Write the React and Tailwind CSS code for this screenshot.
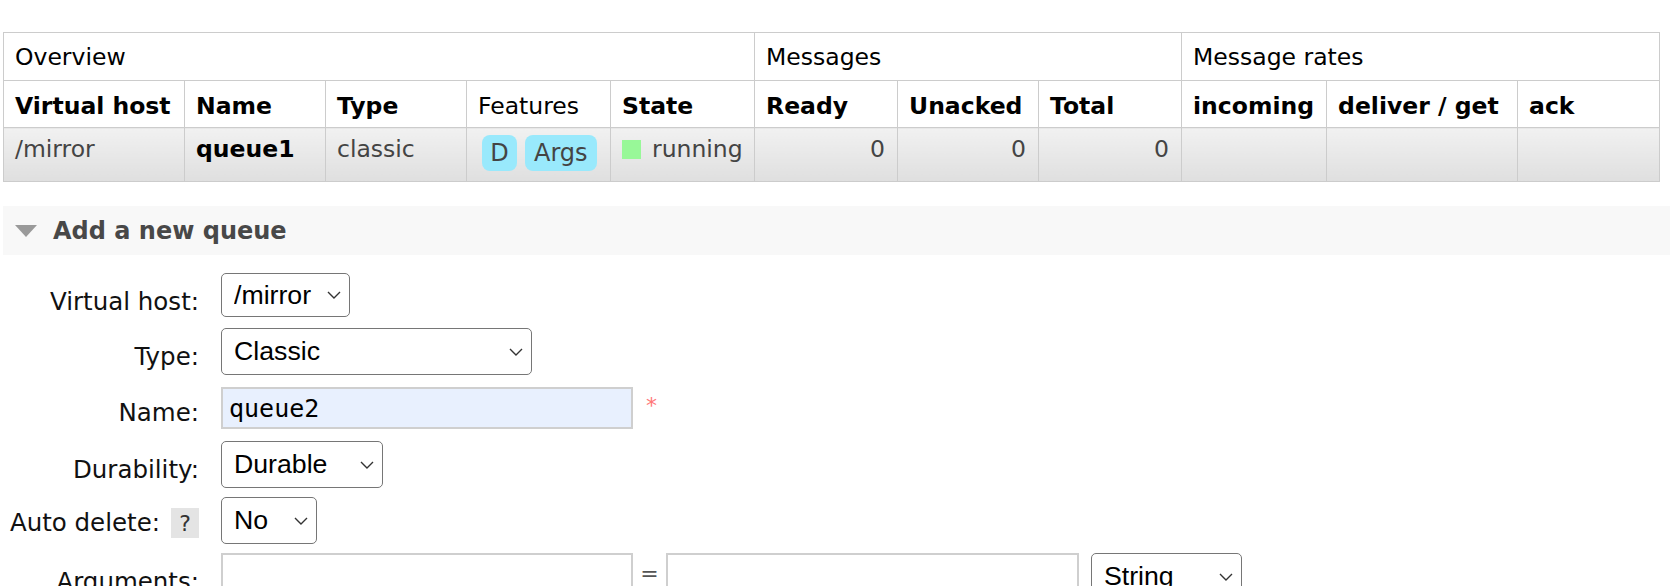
const Chevron = () => (
  <svg
    className="pointer-events-none absolute right-[9px] top-1/2 -translate-y-1/2"
    width="14"
    height="8"
    viewBox="0 0 14 8"
    fill="none"
  >
    <path d="M1 1l6 6 6-6" stroke="#333" strokeWidth="1.4" />
  </svg>
);

const Select = ({ className, options }) => (
  <div className={`relative ${className}`}>
    <select
      defaultValue={options[0]}
      className="w-full h-full appearance-none rounded-[5px] border border-[#767676] bg-white pl-[12px] pr-[30px] font-['Liberation_Sans',Arial,sans-serif] text-[26.7px] text-black outline-none"
    >
      {options.map((o) => (
        <option key={o}>{o}</option>
      ))}
    </select>
    <Chevron />
  </div>
);

const Row = ({ label, help, offset, className, children }) => (
  <div className={`flex items-center ${className}`}>
    <div className={`w-[199px] shrink-0 flex items-center justify-end text-[24.5px] text-[#111] ${offset}`}>
      <span>{label}</span>
      {help && (
        <span className="ml-[11px] w-[28px] h-[30px] flex items-center justify-center bg-[#e4e4e4] text-[22px] text-[#333]">
          ?
        </span>
      )}
    </div>
    <div className="ml-[22px] flex items-center">{children}</div>
  </div>
);

const th = 'border border-[#ccc] px-[11px] text-left align-middle';
const td =
  'border border-[#ccc] px-[11px] pt-[8px] align-top bg-gradient-to-b from-[#f1f1f1] to-[#dfdfdf] text-[#444] leading-[27px]';

export default function App() {
  return (
    <div className="min-h-[586px] bg-white pl-[3px] pt-[32px] font-['DejaVu_Sans',Verdana,sans-serif] text-black">
      <table className="table-fixed border-collapse w-[1657px] text-[23.5px]">
        <colgroup>
          <col className="w-[181px]" />
          <col className="w-[141px]" />
          <col className="w-[141px]" />
          <col className="w-[144px]" />
          <col className="w-[144px]" />
          <col className="w-[143px]" />
          <col className="w-[141px]" />
          <col className="w-[143px]" />
          <col className="w-[145px]" />
          <col className="w-[191px]" />
          <col className="w-[142px]" />
        </colgroup>
        <thead>
          <tr className="h-[48px]">
            <th colSpan={5} className={`${th} font-normal pt-[2px]`}>Overview</th>
            <th colSpan={3} className={`${th} font-normal pt-[2px]`}>Messages</th>
            <th colSpan={3} className={`${th} font-normal pt-[2px]`}>Message rates</th>
          </tr>
          <tr className="h-[47px]">
            <th className={`${th} pt-[5px] whitespace-nowrap`}>Virtual host</th>
            <th className={`${th} pt-[5px]`}>Name</th>
            <th className={`${th} pt-[5px]`}>Type</th>
            <th className={`${th} pt-[5px] font-normal`}>Features</th>
            <th className={`${th} pt-[5px]`}>State</th>
            <th className={`${th} pt-[5px]`}>Ready</th>
            <th className={`${th} pt-[5px]`}>Unacked</th>
            <th className={`${th} pt-[5px]`}>Total</th>
            <th className={`${th} pt-[5px]`}>incoming</th>
            <th className={`${th} pt-[5px] whitespace-nowrap`}>deliver / get</th>
            <th className={`${th} pt-[5px]`}>ack</th>
          </tr>
        </thead>
        <tbody>
          <tr className="h-[54px]">
            <td className={td}>/mirror</td>
            <td className={`${td} font-bold !text-black`}>queue1</td>
            <td className={td}>classic</td>
            <td className={`${td} !pt-[7px]`}>
              <div className="flex gap-[8px] pl-[4px]">
                <span className="h-[36px] w-[35px] flex items-center justify-center rounded-[8px] bg-[#99e9fc] text-[24px]">D</span>
                <span className="h-[36px] px-[9px] flex items-center rounded-[8px] bg-[#99e9fc] text-[24px]">Args</span>
              </div>
            </td>
            <td className={td}>
              <div className="flex items-center h-[27px]">
                <span className="w-[19px] h-[19px] mr-[11px] bg-[#98f898]" />
                running
              </div>
            </td>
            <td className={`${td} text-right !pr-[12px]`}>0</td>
            <td className={`${td} text-right !pr-[12px]`}>0</td>
            <td className={`${td} text-right !pr-[12px]`}>0</td>
            <td className={td} />
            <td className={td} />
            <td className={td} />
          </tr>
        </tbody>
      </table>

      <div className="mt-[24px] h-[49px] flex items-center bg-[#f8f8f8]">
        <svg className="ml-[12px]" width="22" height="12" viewBox="0 0 22 12">
          <path d="M0 0h22L11 12z" fill="#9a9a9a" />
        </svg>
        <h2 className="ml-[16px] text-[24px] font-bold text-[#484848]">Add a new queue</h2>
      </div>

      <div className="-ml-[3px] flex flex-col">
        <Row label="Virtual host:" offset="pt-[14px]" className="mt-[18px] h-[44px]">
          <Select className="w-[129px] h-[44px]" options={['/mirror', '/']} />
        </Row>
        <Row label="Type:" offset="pt-[12px]" className="mt-[11px] h-[47px]">
          <Select className="w-[311px] h-[47px]" options={['Classic', 'Quorum', 'Stream']} />
        </Row>
        <Row label="Name:" offset="pt-[11px]" className="mt-[12px] h-[42px]">
          <input
            defaultValue="queue2"
            className="w-[412px] h-[42px] border-2 border-[#cfcfcf] bg-[#e8f0fe] pl-[6px] font-['DejaVu_Sans_Mono',monospace] text-[25px] text-black outline-none"
          />
          <span className="ml-[13px] -mt-[6px] text-[22px] text-[#f77]">*</span>
        </Row>
        <Row label="Durability:" offset="pt-[11px]" className="mt-[12px] h-[47px]">
          <Select className="w-[162px] h-[47px]" options={['Durable', 'Transient']} />
        </Row>
        <Row label="Auto delete:" help offset="pt-[5px]" className="mt-[9px] h-[47px]">
          <Select className="w-[96px] h-[47px]" options={['No', 'Yes']} />
        </Row>
        <div className="mt-[9px] flex items-start">
          <div className="w-[199px] shrink-0 pt-[11px] text-right text-[24.5px] text-[#111]">Arguments:</div>
          <div className="ml-[22px] flex items-start">
            <input className="w-[412px] h-[42px] border-2 border-[#cfcfcf] bg-white outline-none" />
            <span className="w-[33px] pt-[4px] text-center text-[22px] text-[#555]">=</span>
            <input className="w-[413px] h-[42px] border-2 border-[#cfcfcf] bg-white outline-none" />
            <Select className="ml-[12px] w-[151px] h-[47px]" options={['String', 'Number', 'Boolean', 'List']} />
          </div>
        </div>
      </div>
    </div>
  );
}
